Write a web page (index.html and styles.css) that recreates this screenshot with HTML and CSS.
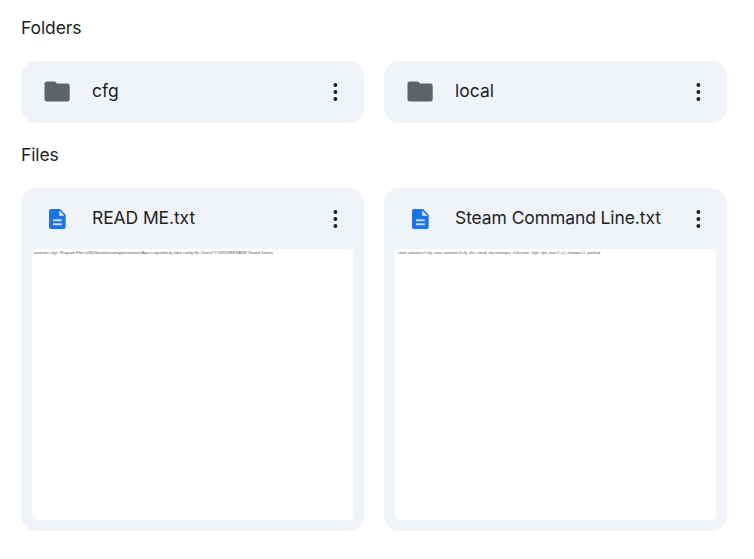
FILE: index.html
```html
<!DOCTYPE html>
<html lang="en">
<head>
<meta charset="utf-8">
<title>Drive</title>
<link rel="stylesheet" href="styles.css">
</head>
<body>
<svg width="0" height="0" class="symbols">
  <symbol id="folder" viewBox="0 0 26 21"><path d="M3 .5h7.2c.6 0 1 .2 1.4.6L13 2.6h10.2a2.5 2.5 0 0 1 2.5 2.5V18a2.5 2.5 0 0 1-2.5 2.5H3A2.5 2.5 0 0 1 .5 18V3A2.5 2.5 0 0 1 3 .5z" fill="#5f6368"/></symbol>
  <symbol id="doc" viewBox="0 0 17 20"><path d="M2 0h9l5.7 5.8V18a2 2 0 0 1-2 2H2a2 2 0 0 1-2-2V2a2 2 0 0 1 2-2z" fill="#1a73e8"/><path d="M10.2 1.6v5.2h5.2z" fill="#e4eefb"/><path d="M4 11.3h8.8M4 15.3h8.8" stroke="#c6dcf9" stroke-width="2"/></symbol>
  <symbol id="more" viewBox="0 0 6 20"><g fill="#1f1f1f"><circle cx="3.4" cy="3" r="1.95"/><circle cx="3.4" cy="10" r="1.95"/><circle cx="3.4" cy="17" r="1.95"/></g></symbol>
</svg>
<main>
  <h2>Folders</h2>
  <section class="grid">
    <article class="card"><header><svg class="folder"><use href="#folder"/></svg><span class="name">cfg</span><svg class="more"><use href="#more"/></svg></header></article>
    <article class="card"><header><svg class="folder"><use href="#folder"/></svg><span class="name">local</span><svg class="more"><use href="#more"/></svg></header></article>
  </section>
  <h2 class="files">Files</h2>
  <section class="grid">
    <article class="card file"><header><svg class="doc"><use href="#doc"/></svg><span class="name long">READ ME.txt</span><svg class="more"><use href="#more"/></svg></header>
      <div class="preview"><svg width="321" height="10"><text x="2" y="5.3" textLength="239" lengthAdjust="spacingAndGlyphs">autoexec cfgs: \Program Files (x86)\Steam\steamapps\common\Apex Legends\cfg video config file: \Users\"YOURUSERNAME"\Saved Games</text></svg></div>
    </article>
    <article class="card file"><header><svg class="doc"><use href="#doc"/></svg><span class="name long">Steam Command Line.txt</span><svg class="more"><use href="#more"/></svg></header>
      <div class="preview"><svg width="321" height="10"><text x="2" y="5.3" textLength="203" lengthAdjust="spacingAndGlyphs">+exec autoexec2.cfg +exec autoexec3.cfg -dev -novid -forcenovsync -fullscreen -high +fps_max 0 +cl_showpos 1 -preload</text></svg></div>
    </article>
  </section>
</main>
</body>
</html>
```
FILE: styles.css
```css
* { box-sizing: border-box; }
body { margin: 0; background: #fff; color: #1f1f1f; font-family: Inter, Roboto, sans-serif; font-size: 17.5px; }
.symbols { display: none; }
main { padding: 16px 27px 0 21px; }
h2 { margin: 0 0 21px; font-size: 17.5px; font-weight: 400; line-height: 24px; letter-spacing: -.1px; }
.files { margin-top: 20px; }
.grid { display: grid; grid-template-columns: 343px 343px; gap: 20px; }
.card { background: #f0f3f8; border-radius: 15px; height: 62px; }
.file { height: 343px; }
header { display: flex; align-items: center; height: 61px; padding: 0 26px 0 23px; }
.folder { width: 26px; height: 21px; flex: none; margin-right: 22px; }
.doc { width: 17px; height: 20px; flex: none; margin: 1px 26px 0 5px; }
.name { flex: 1; white-space: nowrap; line-height: 24px; padding-bottom: 2px; }
.long { letter-spacing: -.1px; }
.more { width: 6px; height: 20px; flex: none; }
.preview { height: 271px; margin: 0 11px; background: #fff; border-radius: 5px; overflow: hidden; }
.preview svg { display: block; }
.preview text { font: 4px "Liberation Sans", sans-serif; fill: #555; }
```
